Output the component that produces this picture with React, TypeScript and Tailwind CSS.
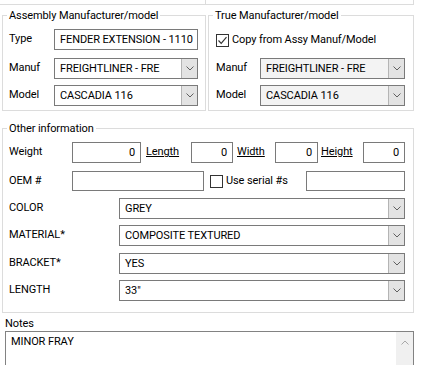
import React from 'react'

// Windows-style form: assembly / true manufacturer, other info, notes

const edge = 'border border-[#7a7a7a]'

function Chevron({ up = false, color = '#606060' }: { up?: boolean; color?: string }) {
  return (
    <svg width="8" height="5" viewBox="0 0 8 5" className="block">
      <path d={up ? 'M0.5 4.5 L4 1 L7.5 4.5' : 'M0.5 0.5 L4 4 L7.5 0.5'} fill="none" stroke={color} strokeWidth="1" />
    </svg>
  )
}

function TextBox({ value = '', w, h = 21, right = false }: { value?: string; w: number; h?: number; right?: boolean }) {
  return (
    <div
      className={`${edge} bg-white flex items-center shrink-0 ${right ? 'justify-end pr-[5px]' : 'pl-[5px]'}`}
      style={{ width: w, height: h }}
    >
      <span className="leading-none whitespace-nowrap">{value}</span>
    </div>
  )
}

function Combo({ value, w, disabled = false }: { value: string; w: number; disabled?: boolean }) {
  return (
    <div
      className={`${edge} flex h-[21px] shrink-0 ${disabled ? 'bg-[#f3f3f3]' : 'bg-white'}`}
      style={{ width: w }}
    >
      <div className="flex-1 flex items-center pl-[5px] overflow-hidden">
        <span className="leading-none whitespace-nowrap">{value}</span>
      </div>
      <div className="w-[16px] h-full bg-[#e3e3e3] border-l border-[#b4b4b4] flex items-center justify-center">
        <Chevron />
      </div>
    </div>
  )
}

function Check({ checked = false }: { checked?: boolean }) {
  return (
    <div className="w-[13px] h-[13px] border border-[#333333] bg-white shrink-0 flex items-center justify-center">
      {checked && (
        <svg width="11" height="11" viewBox="0 0 11 11" className="block">
          <path d="M1.5 5.5 L4.2 8.3 L9.5 2.2" fill="none" stroke="#333333" strokeWidth="1.2" />
        </svg>
      )}
    </div>
  )
}

function Group({ title, className, children }: { title: string; className: string; children: React.ReactNode }) {
  return (
    <div className={`relative border border-[#dcdcdc] ${className}`}>
      <span className="absolute -top-[8px] left-[4px] bg-white px-[2px] leading-[15px]">{title}</span>
      {children}
    </div>
  )
}

const comboRows = [
  { label: 'COLOR', value: 'GREY', mt: 'mt-[7px]' },
  { label: 'MATERIAL*', value: 'COMPOSITE TEXTURED', mt: 'mt-[6px]' },
  { label: 'BRACKET*', value: 'YES', mt: 'mt-[7px]' },
  { label: 'LENGTH', value: '33"', mt: 'mt-[6px]' },
]

export default function App() {
  return (
    <div className="w-[438px] h-[365px] overflow-hidden bg-white text-black text-[11px] tracking-[-0.1px] font-['Roboto',sans-serif]">
      {/* bottom edge of the groups above */}
      <div className="flex h-[5px]">
        <div className="w-[206px] border-b border-r border-[#dcdcdc]" />
        <div className="w-[208px] border-b border-r border-[#dcdcdc]" />
      </div>

      <div className="flex mt-[10px]">
        <Group title="Assembly Manufacturer/model" className="ml-[2px] w-[204px] h-[96px]">
          <div className="flex flex-col pl-[6px] pt-[13px]">
            <div className="flex items-center">
              <span className="w-[45px]">Type</span>
              <TextBox value="FENDER EXTENSION - 1110" w={144} />
            </div>
            <div className="flex items-center mt-[8px]">
              <span className="w-[45px]">Manuf</span>
              <Combo value="FREIGHTLINER - FRE" w={144} />
            </div>
            <div className="flex items-center mt-[6px]">
              <span className="w-[45px]">Model</span>
              <Combo value="CASCADIA 116" w={144} />
            </div>
          </div>
        </Group>

        <Group title="True Manufacturer/model" className="ml-[2px] w-[206px] h-[96px]">
          <div className="flex flex-col pl-[7px] pt-[18px]">
            <div className="flex items-center h-[13px]">
              <Check checked />
              <span className="ml-[3px]">Copy from Assy Manuf/Model</span>
            </div>
            <div className="flex items-center mt-[11px]">
              <span className="w-[44px]">Manuf</span>
              <Combo value="FREIGHTLINER - FRE" w={145} disabled />
            </div>
            <div className="flex items-center mt-[6px]">
              <span className="w-[44px]">Model</span>
              <Combo value="CASCADIA 116" w={145} disabled />
            </div>
          </div>
        </Group>
      </div>

      <Group title="Other information" className="ml-[2px] mt-[17px] w-[412px] h-[185px]">
        <div className="flex flex-col pl-[6px] pt-[13px]">
          <div className="flex items-center">
            <span className="w-[63px]">Weight</span>
            <TextBox value="0" w={69} right />
            <span className="ml-[5px] w-[45px] underline">Length</span>
            <TextBox value="0" w={42} right />
            <span className="ml-[4px] w-[38px] underline">Width</span>
            <TextBox value="0" w={43} right />
            <span className="ml-[3px] w-[42px] underline">Height</span>
            <TextBox value="0" w={42} right />
          </div>
          <div className="flex items-center mt-[8px]">
            <span className="w-[63px]">OEM #</span>
            <TextBox w={132} h={20} />
            <div className="ml-[6px]">
              <Check />
            </div>
            <span className="ml-[3px] w-[80px]">Use serial #s</span>
            <TextBox w={99} h={20} />
          </div>
          {comboRows.map(r => (
            <div key={r.label} className={`flex items-center ${r.mt}`}>
              <span className="w-[110px]">{r.label}</span>
              <Combo value={r.value} w={286} />
            </div>
          ))}
        </div>
      </Group>

      <div className="ml-[5px] mt-[4px] leading-[14px] h-[14px]">Notes</div>
      <div className="ml-[5px] w-[409px] h-[45px] border border-[#828282] bg-white flex">
        <div className="flex-1 pl-[5px] pt-[2px] leading-[16px]">MINOR FRAY</div>
        <div className="w-[17px] h-full bg-[#f0f0f0] flex justify-center pt-[8px]">
          <Chevron up color="#a8a8a8" />
        </div>
      </div>
    </div>
  )
}
